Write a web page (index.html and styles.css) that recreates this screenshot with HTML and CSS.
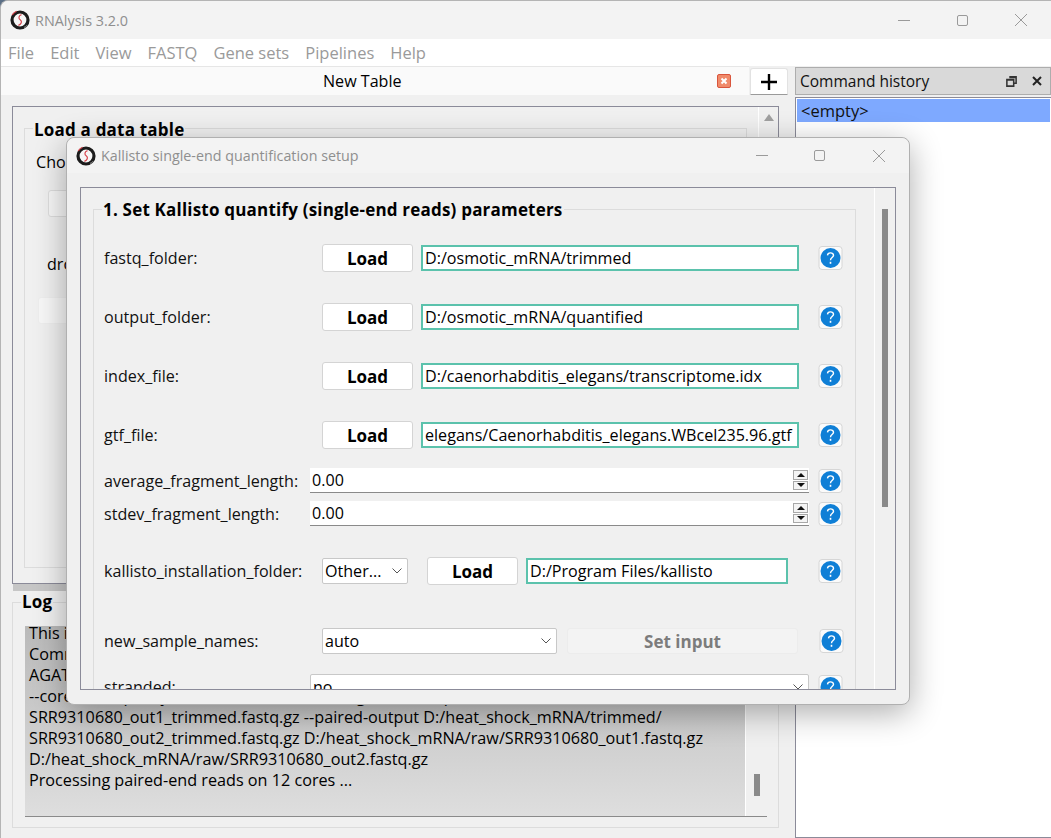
FILE: index.html
```html
<!DOCTYPE html>
<html lang="en">
<head>
  <meta charset="UTF-8">
  <title>RNAlysis 3.2.0</title>
  <link rel="stylesheet" href="styles.css">
</head>
<body>

<svg class="defs" width="0" height="0">
  <symbol id="logo" viewBox="0 0 20 20">
    <circle cx="10" cy="10" r="8" fill="#f6f6f6" stroke="#1c1c1c" stroke-width="3.2"/>
    <path d="M2.2 5 A9.4 9.4 0 0 1 6.5 1.2" fill="none" stroke="#d8474f" stroke-width="1.2"/>
    <path d="M14 17.4 A9.4 9.4 0 0 0 17 15.4" fill="none" stroke="#8d8d8d" stroke-width="1"/>
    <path d="M11.5 4.6 C8.4 5.6 8.2 8.4 10.4 10 C12.4 11.5 11.4 14.2 8.4 15.4" fill="none" stroke="#d8474f" stroke-width="1.2"/>
  </symbol>
  <symbol id="help" viewBox="0 0 24 24">
    <rect x="0.5" y="0.5" width="23" height="23" rx="3" fill="#fbfbfb" stroke="#d6d6d6"/>
    <circle cx="12" cy="12" r="10" fill="#0f7fd6"/>
    <path d="M9 9.4 C9.2 6 15.2 6.2 15 9.4 C14.9 11.6 12 11.6 12 14.2" fill="none" stroke="#fff" stroke-width="1.4"/>
    <rect x="11.2" y="15.8" width="1.6" height="2" fill="#fff"/>
  </symbol>
</svg>

<div class="app">
  <div class="titlebar">
    <svg class="logo"><use href="#logo"/></svg>
    <span class="app-title">RNAlysis 3.2.0</span>
    <div class="win-btns">
      <span class="win-min"></span>
      <span class="win-max"></span>
      <svg class="win-close" viewBox="0 0 12 12"><path d="M0 0L12 12M12 0L0 12"/></svg>
    </div>
  </div>

  <div class="menubar">
    <span>File</span><span>Edit</span><span>View</span><span>FASTQ</span><span>Gene sets</span><span>Pipelines</span><span>Help</span>
  </div>

  <div class="workspace">
    <div class="left-col">
      <div class="tabbar">
        <div class="tab">
          <span class="tab-label">New Table</span>
          <svg class="tab-close" viewBox="0 0 14 14">
            <rect x="0.5" y="0.5" width="13" height="13" rx="1.5" fill="#f08a6a" stroke="#d9553c"/>
            <path d="M4.5 4.5L9.5 9.5M9.5 4.5L4.5 9.5" stroke="#fff" stroke-width="2"/>
          </svg>
        </div>
        <div class="tab-add">
          <svg viewBox="0 0 16 16"><path d="M8 0V16M0 8H16" stroke="#000" stroke-width="2.4"/></svg>
        </div>
      </div>

      <div class="table-frame">
        <div class="table-body">
          <div class="group load-group">
            <span class="group-title">Load a data table</span>
            <div class="choose-label">Choose a table</div>
            <div class="ghost-btn choose-btn"></div>
            <div class="drop-label">drop</div>
            <div class="ghost-btn start-btn"></div>
          </div>
        </div>
        <div class="table-scroll"><span class="arrow-up"></span></div>
      </div>

      <div class="splitter"></div>

      <div class="group log-group">
        <span class="group-title log-title">Log</span>
        <div class="log-box">
          <div class="log-text">This is the log of the current session
Command line used:
AGATHA cutadapt paired-end trimming
--cores 12 --quality-cutoff 20 --minimum-length 10 --output D:/heat_shock_mRNA/
SRR9310680_out1_trimmed.fastq.gz --paired-output D:/heat_shock_mRNA/trimmed/
SRR9310680_out2_trimmed.fastq.gz D:/heat_shock_mRNA/raw/SRR9310680_out1.fastq.gz
D:/heat_shock_mRNA/raw/SRR9310680_out2.fastq.gz
Processing paired-end reads on 12 cores ...</div>
          <div class="log-scroll"><span class="log-thumb"></span></div>
        </div>
      </div>
    </div>

    <div class="dock">
      <div class="dock-title">
        <span>Command history</span>
        <svg class="dock-float" viewBox="0 0 10 10"><path d="M3 .8H9.2V6.5H7M.8 3.2H7V9.2H.8Z M.8 3.6H7 M3 1.4H9.2" fill="none" stroke="#333" stroke-width="1.4"/></svg>
        <svg class="dock-close" viewBox="0 0 10 10"><path d="M1 1L9 9M9 1L1 9" stroke="#222" stroke-width="2"/></svg>
      </div>
      <div class="dock-list">
        <div class="dock-item">&lt;empty&gt;</div>
      </div>
    </div>
  </div>
</div>

<div class="dialog">
  <div class="titlebar dialog-titlebar">
    <svg class="logo dialog-logo"><use href="#logo"/></svg>
    <span class="app-title dialog-title">Kallisto single-end quantification setup</span>
    <div class="win-btns dialog-btns">
      <span class="win-min"></span>
      <span class="win-max"></span>
      <svg class="win-close" viewBox="0 0 12 12"><path d="M0 0L12 12M12 0L0 12"/></svg>
    </div>
  </div>

  <div class="scroll-frame">
    <div class="form-area">
      <div class="group form-group">
        <span class="group-title form-title">1. Set Kallisto quantify (single-end reads) parameters</span>

        <div class="row row-file">
          <label>fastq_folder:</label>
          <button class="load-btn">Load</button>
          <div class="path-input">D:/osmotic_mRNA/trimmed</div>
          <svg class="help"><use href="#help"/></svg>
        </div>
        <div class="row row-file">
          <label>output_folder:</label>
          <button class="load-btn">Load</button>
          <div class="path-input">D:/osmotic_mRNA/quantified</div>
          <svg class="help"><use href="#help"/></svg>
        </div>
        <div class="row row-file">
          <label>index_file:</label>
          <button class="load-btn">Load</button>
          <div class="path-input">D:/caenorhabditis_elegans/transcriptome.idx</div>
          <svg class="help"><use href="#help"/></svg>
        </div>
        <div class="row row-file">
          <label>gtf_file:</label>
          <button class="load-btn">Load</button>
          <div class="path-input">elegans/Caenorhabditis_elegans.WBcel235.96.gtf</div>
          <svg class="help"><use href="#help"/></svg>
        </div>

        <div class="row row-spin row-spin-first">
          <label>average_fragment_length:</label>
          <div class="spin"><span>0.00</span><div class="spin-btns"><i class="up"></i><i class="down"></i></div></div>
          <svg class="help"><use href="#help"/></svg>
        </div>
        <div class="row row-spin row-spin-second">
          <label>stdev_fragment_length:</label>
          <div class="spin"><span>0.00</span><div class="spin-btns"><i class="up"></i><i class="down"></i></div></div>
          <svg class="help"><use href="#help"/></svg>
        </div>

        <div class="row row-kallisto">
          <label>kallisto_installation_folder:</label>
          <div class="combo combo-other"><span>Other...</span><svg viewBox="0 0 10 6"><path d="M.5 .5L5 5L9.5 .5"/></svg></div>
          <button class="load-btn load-short">Load</button>
          <div class="path-input path-short">D:/Program Files/kallisto</div>
          <svg class="help"><use href="#help"/></svg>
        </div>

        <div class="row row-names">
          <label>new_sample_names:</label>
          <div class="combo combo-auto"><span>auto</span><svg viewBox="0 0 10 6"><path d="M.5 .5L5 5L9.5 .5"/></svg></div>
          <button class="set-btn">Set input</button>
          <svg class="help"><use href="#help"/></svg>
        </div>

        <div class="row row-stranded">
          <label>stranded:</label>
          <div class="combo combo-wide"><span>no</span><svg viewBox="0 0 10 6"><path d="M.5 .5L5 5L9.5 .5"/></svg></div>
          <svg class="help"><use href="#help"/></svg>
        </div>
      </div>
    </div>
    <div class="form-scroll"><span class="form-thumb"></span></div>
  </div>
</div>

</body>
</html>
```

FILE: styles.css
```css
* {
  box-sizing: border-box;
}
html, body {
  margin: 0;
  height: 100%;
  overflow: hidden;
}
body {
  font-family: "Open Sans", "Noto Sans", sans-serif;
  font-size: 16.1px;
  color: #000;
  background: #5b6f86;
  position: relative;
}
.defs {
  position: absolute;
}
.app {
  width: 1051px;
  height: 838px;
  background: #f0f0f0;
  border: 1px solid #b4b4b4;
  border-width: 1px 0 0 1px;
  border-top-left-radius: 8px;
  display: flex;
  flex-direction: column;
  overflow: hidden;
}

/* title bars */
.titlebar {
  height: 38px;
  background: #f3f3f3;
  display: flex;
  align-items: center;
  padding-left: 9px;
  flex: none;
}
.logo {
  width: 20px;
  height: 20px;
}
.app-title {
  margin-left: 5px;
  color: #8f8f8f;
  font-size: 14.4px;
}
.win-btns {
  margin-left: auto;
  display: flex;
  align-items: center;
  padding-right: 24px;
}
.win-min {
  width: 12px;
  height: 1px;
  background: #9a9a9a;
}
.win-max {
  width: 11px;
  height: 11px;
  border: 1px solid #9a9a9a;
  border-radius: 2px;
  margin-left: 47px;
}
.win-close {
  width: 12px;
  height: 12px;
  margin-left: 47px;
  stroke: #9a9a9a;
  stroke-width: 1;
}

.menubar {
  height: 27px;
  background: #fff;
  display: flex;
  align-items: center;
  gap: 16px;
  padding-left: 7px;
  color: #9a9a9a;
  font-size: 16.5px;
  flex: none;
}

.workspace {
  flex: 1;
  display: flex;
  min-height: 0;
}
.left-col {
  width: 794px;
  display: flex;
  flex-direction: column;
  flex: none;
}

/* tab strip */
.tabbar {
  height: 29px;
  display: flex;
  flex: none;
}
.tab {
  width: 748px;
  background: #fafafa;
  border-top: 1px solid #e6e6e6;
  display: flex;
  align-items: center;
  position: relative;
}
.tab-label {
  margin-left: 322px;
}
.tab-close {
  width: 14px;
  height: 14px;
  margin-left: auto;
  margin-right: 18px;
}
.tab-add {
  width: 38px;
  height: 27px;
  margin: 2px 0 0 1px;
  background: #fff;
  border: 1px solid #e2e2e2;
  border-bottom: 1px solid #9a9a9a;
  border-radius: 3px 3px 0 0;
  display: flex;
  align-items: center;
  justify-content: center;
}
.tab-add svg {
  width: 16px;
  height: 16px;
}

.group {
  border: 1px solid #dcdcdc;
  position: relative;
}
.group-title {
  position: absolute;
  top: -10px;
  left: 8px;
  padding: 0 1px;
  background: #f0f0f0;
  font-size: 17px;
  letter-spacing: 0.2px;
  font-weight: 700;
  line-height: 21px;
}
.log-title {
  top: -12px;
}

/* table page behind the dialog */
.table-frame {
  margin: 11px 0 0 11px;
  width: 767px;
  height: 478px;
  border: 1px solid #8b8b99;
  display: flex;
  flex: none;
}
.table-body {
  flex: 1;
  padding: 21px 11px 0 11px;
}
.load-group {
  height: 440px;
}
.choose-label {
  margin: 21px 0 0 11px;
  line-height: 24px;
}
.ghost-btn {
  background: #f7f7f7;
  border: 1px solid #dddddd;
  border-radius: 3px;
}
.choose-btn {
  width: 100px;
  height: 27px;
  margin: 16px 0 0 23px;
}
.drop-label {
  margin: 35px 0 0 22px;
  line-height: 24px;
}
.start-btn {
  width: 100px;
  height: 27px;
  margin: 21px 0 0 13px;
  border-color: #eeeeee;
}
.table-scroll {
  width: 20px;
  border-left: 1px solid #fff;
  display: flex;
  justify-content: center;
  padding-top: 7px;
}
.arrow-up {
  width: 0;
  height: 0;
  border: 5px solid transparent;
  border-top: 0;
  border-bottom: 7px solid #a0a0a0;
}

.splitter {
  height: 7px;
  margin-left: 12px;
  width: 766px;
  background: #c6c6c6;
  flex: none;
}

/* log */
.log-group {
  margin: 11px 0 0 11px;
  width: 767px;
  height: 226px;
  flex: none;
  padding: 23px 11px 0 12px;
}
.log-box {
  height: 191px;
  display: flex;
  background: linear-gradient(#b9b9b9, #dedede);
  border-bottom: 1px solid #8a8a8a;
  overflow: hidden;
}
.log-text {
  width: 720px;
  flex: none;
  margin-top: -3px;
  padding: 0 0 0 4px;
  font-size: 16.2px;
  line-height: 21px;
  white-space: pre;
  overflow: hidden;
}
.log-scroll {
  flex: 1;
  background: #f0f0f0;
  border-left: 1px solid #fff;
  position: relative;
  display: flex;
  flex-direction: column;
  align-items: center;
  justify-content: flex-end;
  padding-bottom: 20px;
}
.log-thumb {
  width: 6px;
  height: 22px;
  background: #8a8a8a;
}

/* command history dock */
.dock {
  flex: 1;
  display: flex;
  flex-direction: column;
  padding-top: 1px;
}
.dock-title {
  height: 28px;
  background: #d9d9d9;
  border: 1px solid #adadad;
  display: flex;
  align-items: center;
  padding: 0 8px 0 4px;
  font-size: 15.5px;
  flex: none;
}
.dock-title span {
  flex: 1;
  color: #111;
}
.dock-float {
  width: 11px;
  height: 11px;
}
.dock-close {
  width: 10px;
  height: 10px;
  margin-left: 15px;
}
.dock-list {
  flex: 1;
  margin-top: 2px;
  background: #fff;
  border: 1px solid #8b8b99;
  border-right: 0;
  padding: 1px 1px 0 1px;
}
.dock-item {
  height: 23px;
  line-height: 24px;
  padding-left: 4px;
  background: #7ea9ff;
  color: #111;
  font-size: 16.5px;
}

/* dialog window, floats over the main window */
.dialog {
  position: absolute;
  left: 66px;
  top: 137px;
  width: 844px;
  height: 568px;
  background: #f0f0f0;
  border: 1px solid #b0b0b0;
  border-radius: 8px;
  box-shadow: 0 8px 32px rgba(0, 0, 0, 0.32);
  overflow: hidden;
}
.dialog-titlebar {
  height: 35px;
  padding-left: 9px;
  border-radius: 8px 8px 0 0;
}
.dialog-logo {
  width: 20px;
  height: 20px;
}
.dialog-title {
  margin-left: 5px;
  font-size: 14.3px;
}
.dialog-btns .win-max {
  margin-left: 46px;
}
.dialog-btns .win-close {
  margin-left: 48px;
}
.scroll-frame {
  margin: 14px 0 0 13px;
  width: 816px;
  height: 503px;
  border: 1px solid #8b8b99;
  display: flex;
  overflow: hidden;
}
.form-area {
  width: 793px;
  flex: none;
  padding: 21px 0 0 12px;
  overflow: hidden;
}
.form-group {
  width: 763px;
  height: 700px;
  padding: 34px 0 0 10px;
}
.form-title {
  left: 8px;
  top: -11px;
}
.form-scroll {
  flex: 1;
  border-left: 1px solid #fff;
  padding: 21px 0 0 7px;
}
.form-thumb {
  display: block;
  width: 6px;
  height: 298px;
  background: #8a8a8a;
}

.row {
  display: flex;
  align-items: center;
  position: relative;
}
.row label {
  flex: none;
  width: 218px;
  color: #111;
}
.help {
  width: 25px;
  height: 24px;
  flex: none;
}
.row-file {
  height: 28px;
  margin-bottom: 31px;
}
.load-btn {
  width: 91px;
  height: 28px;
  padding: 0;
  background: #fff;
  border: 1px solid #d4d4d4;
  border-radius: 3px;
  font: 700 17px "Open Sans", "Noto Sans", sans-serif;
  color: #000;
  flex: none;
}
.path-input {
  width: 378px;
  height: 26px;
  margin: 0 19px 0 8px;
  border: 2px solid #5bc2ac;
  background: #fff;
  padding-left: 2px;
  line-height: 22px;
  white-space: nowrap;
  overflow: hidden;
  flex: none;
}
.row-spin {
  height: 25px;
}
.row-spin label {
  width: 206px;
}
.row-spin-first {
  margin-top: -12px;
}
.row-spin-second {
  margin-top: 8px;
}
.spin {
  width: 499px;
  height: 25px;
  margin-right: 9px;
  background: #fff;
  border-bottom: 1px solid #8a8a8a;
  padding: 0 1px 0 2px;
  display: flex;
  align-items: center;
  justify-content: space-between;
  flex: none;
}
.spin-btns {
  width: 15px;
  height: 20px;
  display: flex;
  flex-direction: column;
  gap: 1px;
}
.spin-btns i {
  flex: 1;
  border: 1px solid #a8a8a8;
  background: #f4f4f4;
  display: flex;
  align-items: center;
  justify-content: center;
}
.spin-btns i::after {
  content: "";
  width: 0;
  height: 0;
  border-left: 4px solid transparent;
  border-right: 4px solid transparent;
}
.up::after {
  border-bottom: 4px solid #111;
}
.down::after {
  border-top: 4px solid #111;
}
.row-kallisto {
  height: 28px;
  margin-top: 31px;
}
.combo {
  height: 26px;
  background: #fff;
  border: 1px solid #c8c8c8;
  border-radius: 2px;
  display: flex;
  align-items: center;
  justify-content: space-between;
  padding: 0 5px 0 2px;
  flex: none;
}
.combo svg {
  width: 10px;
  height: 6px;
  fill: none;
  stroke: #555;
  stroke-width: 1;
}
.combo-other {
  width: 86px;
}
.load-short {
  margin-left: 19px;
}
.path-short {
  width: 262px;
  margin-right: 30px;
}
.row-names {
  height: 26px;
  margin-top: 43px;
}
.combo-auto {
  width: 235px;
}
.set-btn {
  width: 231px;
  height: 26px;
  margin: 0 21px 0 10px;
  padding: 0;
  background: #f3f3f3;
  border: 1px solid #ececec;
  border-radius: 3px;
  font: 700 17px "Open Sans", "Noto Sans", sans-serif;
  color: #7c7c7c;
  flex: none;
}
.row-stranded {
  height: 26px;
  margin-top: 20px;
}
.row-stranded label {
  width: 206px;
}
.combo-wide {
  width: 499px;
  margin-right: 9px;
}
```
